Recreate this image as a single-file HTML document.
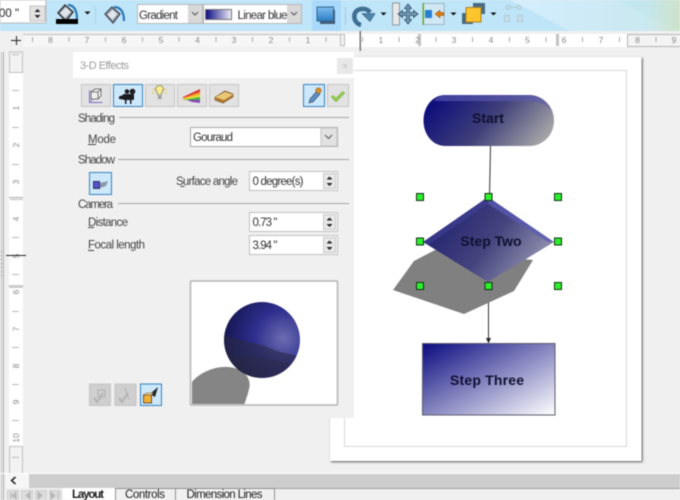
<!DOCTYPE html>
<html><head><meta charset="utf-8"><style>
html,body{margin:0;padding:0;width:680px;height:500px;overflow:hidden;background:#f0f0f0}
svg{display:block;filter:blur(.4px)}
text{font-family:"Liberation Sans",sans-serif}
</style></head><body>
<svg xmlns="http://www.w3.org/2000/svg" width="680" height="500" viewBox="0 0 680 500">
<defs>
<linearGradient id="tb" x1="0" y1="0" x2="1" y2="0"><stop offset="0" stop-color="#bfe5f9"/><stop offset=".8" stop-color="#bfe5f9"/><stop offset=".95" stop-color="#c4e6ee"/><stop offset="1" stop-color="#cfe3c9"/></linearGradient>
<linearGradient id="band" x1="0" y1="0" x2="1" y2="0"><stop offset="0" stop-color="#fff" stop-opacity=".35"/><stop offset="1" stop-color="#fff" stop-opacity=".05"/></linearGradient>
<linearGradient id="g" x1="0" y1="0" x2="1" y2="1"><stop offset="0" stop-color="#0a0a80"/><stop offset="1" stop-color="#fff"/></linearGradient>
<linearGradient id="gs" gradientUnits="userSpaceOnUse" x1="450" y1="85" x2="530" y2="155"><stop offset="0" stop-color="#10107c"/><stop offset=".5" stop-color="#40407a"/><stop offset="1" stop-color="#a4a4a6"/></linearGradient>
<linearGradient id="gd" gradientUnits="userSpaceOnUse" x1="440" y1="205" x2="540" y2="280"><stop offset="0" stop-color="#20206e"/><stop offset=".5" stop-color="#44447e"/><stop offset="1" stop-color="#a0a0b8"/></linearGradient>
<linearGradient id="gh" x1="0" y1="0" x2="1" y2="0"><stop offset="0" stop-color="#0a0a80"/><stop offset="1" stop-color="#eeeef8"/></linearGradient>
<linearGradient id="bl" x1="0" y1="0" x2="0" y2="1"><stop offset="0" stop-color="#7fbdee"/><stop offset="1" stop-color="#2c7fc6"/></linearGradient>
<radialGradient id="sph" cx=".78" cy=".48" r=".85"><stop offset="0" stop-color="#6c6cb0"/><stop offset=".45" stop-color="#2e2e8e"/><stop offset=".85" stop-color="#1a1a5c"/><stop offset="1" stop-color="#121238"/></radialGradient>
<clipPath id="spc"><circle cx="262" cy="340" r="38"/></clipPath>
<filter id="sh" x="-5%" y="-5%" width="110%" height="110%"><feDropShadow dx="1" dy="1" stdDeviation="1" flood-color="#555"/></filter>
</defs>

<!-- toolbar -->
<rect width="680" height="31" fill="url(#tb)"/>
<polygon points="510,0 615,0 680,31 570,31" fill="url(#band)"/>
<rect x="312" y="0" width="29" height="31" fill="#a9d9fa"/>
<rect x="0" y="0" width="46" height="23" fill="#fff" stroke="#b8b8b8"/>
<text x="-1" y="17" font-size="11.500" fill="#222">00 "</text>
<rect x="30" y="6" width="15" height="15" fill="#e2e2e2" stroke="#c4c4c4"/>
<path d="M37.500 9l-3 3h6zM37.500 18l-3-3h6z" fill="#222"/>
<!-- paint bucket 1 -->
<g transform="translate(56,4)">
<path d="M2 9L9 1l8 7-7 9z" fill="#8d99a2" stroke="#333" stroke-width="1.400"/><path d="M4 9l6-6 5 5-6 6z" fill="#dfe5e8"/><path d="M12 1c5 0 9 4 9 14" fill="none" stroke="#2878b8" stroke-width="2.200"/>
</g>
<rect x="56" y="19" width="22" height="5" fill="#000"/>
<path d="M84.500 11.500h6l-3 3z" fill="#111"/>
<rect x="95" y="6" width="1" height="18" fill="#b4cede"/>
<g transform="translate(104,5)"><path d="M1 9L8 2l8 7-7 9z" fill="#8d99a2" stroke="#445" stroke-width="1.200"/><path d="M3.500 9.500l5-5 5 4.500-5 6z" fill="#dfe5e8"/><path d="M10 2c6 0 10 4 10 14" fill="none" stroke="#2878b8" stroke-width="2.200"/></g>
<rect x="137.500" y="4.500" width="65" height="19" fill="#fff" stroke="#b8b8b8"/>
<text x="139" y="19" font-size="11.500" fill="#333" textLength="39">Gradient</text>
<rect x="188" y="5" width="14" height="18" fill="#d8d8d8"/>
<path d="M192 12l3 3 3-3" fill="none" stroke="#555"/>
<rect x="203.500" y="4.500" width="98" height="19" fill="#fff" stroke="#b8b8b8"/>
<rect x="205.500" y="9.500" width="26" height="10" fill="url(#gh)" stroke="#777"/>
<text x="237.500" y="19" font-size="11.500" fill="#333" textLength="50">Linear blue</text>
<rect x="287" y="5" width="14" height="18" fill="#d8d8d8"/>
<path d="M291 12l3 3 3-3" fill="none" stroke="#555"/>
<rect x="320" y="10" width="15" height="14" fill="#445f78"/>
<rect x="317" y="7" width="16.500" height="14" fill="url(#bl)" stroke="#33658e"/>
<!-- right icons -->
<rect x="345" y="7" width="1" height="18" fill="#a8c6d8"/>
<path d="M361 25c-8-2-9-13-2-15.500 5-1.500 9 0 11 3" fill="none" stroke="#3f6f92" stroke-width="4.500"/>
<path d="M362 13.500h13l-5 8z" fill="#4c86ae" stroke="#32566f" stroke-width=".6"/>
<path d="M380.500 12.500h6l-3 3z" fill="#111"/>
<rect x="392.500" y="3" width="7" height="22" fill="#e8e8e8" stroke="#8b9aa4"/>
<path d="M408 4l3.500 4.500h-2v4h4v-2l4.500 3.500-4.500 3.500v-2h-4v4h2l-3.500 4.500-3.500-4.500h2v-4h-4v2l-4.500-3.500 4.500-3.500v2h4v-4h-2z" fill="#7098b4" stroke="#2e4e66" stroke-width=".8"/>
<rect x="423.500" y="3.500" width="20.500" height="21" fill="#d0e8f4" stroke="#9db4c0"/>
<rect x="422.500" y="3" width="1.500" height="22" fill="#6aa82a"/>
<rect x="425" y="10" width="7" height="8" fill="#2a80d0"/>
<path d="M435 14l5-4v2.500h4v3h-4V18z" fill="#df7a10" stroke="#8a4a10" stroke-width=".5"/>
<path d="M450.500 12.500h6l-3 3z" fill="#111"/>
<rect x="473" y="3" width="12" height="11" fill="#4a6a80"/>
<rect x="462" y="13" width="11" height="11" fill="#4a6a80"/>
<rect x="466" y="7.500" width="15" height="14.500" fill="#fcc52e" stroke="#b08020"/>
<path d="M490.500 12.500h6l-3 3z" fill="#111"/>
<g stroke="#a8c6d2" fill="#cbdde4" opacity=".9"><rect x="504.500" y="15.500" width="5" height="6"/><rect x="517.500" y="15.500" width="5" height="6"/><circle cx="508" cy="7.500" r="2"/><circle cx="519" cy="7.500" r="2"/><path d="M510 7.500h7"/></g>

<!-- rulers -->
<rect y="31" width="680" height="21" fill="#f0f0f0"/>
<rect x="23" y="34" width="322" height="13" fill="#f6f6f6"/>
<rect x="23" y="34" width="322" height="1" fill="#bdbdbd"/>
<rect x="345" y="34" width="335" height="13" fill="#fff"/>
<rect x="340.500" y="34.500" width="4" height="11" fill="#f4f4f4" stroke="#bbb"/>
<rect x="627.500" y="34.500" width="53" height="12" fill="#f4f4f4" stroke="#b4b4b4"/>
<rect x="418" y="34" width="3" height="12" fill="#c4c4c4"/>
<rect x="556" y="34" width="3" height="12" fill="#c4c4c4"/>
<rect x="359.500" y="31" width="1.500" height="20" fill="#777"/>
<path d="M11 40.500h10M16.500 36v9" stroke="#222" fill="none"/>
<g font-size="8.500" fill="#888" text-anchor="middle">
<text x="50.500" y="43">8</text><text x="87" y="43">7</text><text x="124" y="43">6</text><text x="161" y="43">5</text><text x="197.500" y="43">4</text><text x="234" y="43">3</text><text x="271" y="43">2</text><text x="308" y="43">1</text>
<text x="381" y="43">1</text><text x="417.500" y="43">2</text><text x="454" y="43">3</text><text x="491" y="43">4</text><text x="527.500" y="43">5</text><text x="564" y="43">6</text><text x="601" y="43">7</text><text x="637.500" y="43">8</text><text x="674" y="43">9</text>
</g>
<path d="M32.500 37v5M69 37v5M105.500 37v5M142.500 37v5M179 37v5M216 37v5M252.500 37v5M289.500 37v5M326 37v5M362.500 37v5M399 37v5M436 37v5M472.500 37v5M509.500 37v5M546 37v5M582.500 37v5M619.500 37v5M656 37v5" stroke="#aaa" fill="none"/>

<rect x="9" y="52" width="14" height="422" fill="#fff"/>
<rect x="9.500" y="52" width="13" height="20.500" fill="#f2f2f2" stroke="#c0c0c0"/>
<rect x="12" y="54" width="7" height="1" fill="#bbb"/>
<rect x="9.500" y="446.500" width="13" height="27" fill="#f2f2f2" stroke="#c0c0c0"/>
<rect x="12" y="457" width="7" height="1" fill="#bbb"/>
<rect x="9" y="197" width="14" height="1" fill="#aaa"/><rect x="10" y="199" width="13" height="1" fill="#bbb"/>
<rect x="9" y="285" width="14" height="3" fill="#ccc"/>
<path d="M12 90.500h7M12 127.500h7M12 164.500h7M12 237.500h7M12 274.500h7M12 311.500h7M12 347.500h7M12 384.500h7M12 420.500h7" stroke="#bbb" fill="none"/>
<g font-size="8.500" fill="#888" text-anchor="middle">
<text transform="translate(19,108) rotate(-90)">1</text><text transform="translate(19,145) rotate(-90)">2</text><text transform="translate(19,182) rotate(-90)">3</text><text transform="translate(19,219) rotate(-90)">4</text><text transform="translate(19,292) rotate(-90)">6</text><text transform="translate(19,329) rotate(-90)">7</text><text transform="translate(19,366) rotate(-90)">8</text><text transform="translate(19,402) rotate(-90)">9</text><text transform="translate(19,438) rotate(-90)">10</text>
<text transform="translate(19,256) rotate(-90)">5</text>
</g>
<rect x="6" y="255" width="20" height="1" fill="#222"/>
<rect x="1" y="52" width="1" height="448" fill="#c4c4c4"/><rect x="3" y="52" width="1" height="448" fill="#aaa"/>
<path d="M1.500 251v28" stroke="#777" stroke-dasharray="1 3" fill="none"/>

<!-- page -->
<rect x="330" y="57" width="311.500" height="404" fill="#fff" filter="url(#sh)"/>
<rect x="344.500" y="70.500" width="282" height="376" fill="none" stroke="#d8d8d8"/>

<!-- flowchart -->
<path d="M490.500 146L489.500 197M488.500 286V338" stroke="#333" fill="none"/>
<path d="M486 338h5l-2.500 5.500z" fill="#222"/>
<polygon points="393,290 414,261 435,250 533,260 514,291 464,314" fill="#808080"/>
<path d="M423.500 120.500c0-14 9-25.500 22-25.500h84c13 0 24.500 11 24.500 25.500s-11 25.500-24.500 25.500h-84c-13 0-22-11.500-22-25.500z" fill="url(#gs)"/>
<path d="M434 101c3-4 6-6 12-6h83c9 0 17 6 22 15-6-6-12-9-22-9h-83c-5 0-8 0-12 0z" fill="#5a5ab0" opacity=".65"/>
<polygon points="488,197 554,242 488,282 423,242" fill="url(#gd)"/>
<polygon points="488,197 554,242 548,242 488,204" fill="#5a5ab4" opacity=".75"/>
<polygon points="488,197 488,204 428,245 423,242" fill="#43439c" opacity=".55"/>
<rect x="422.500" y="343.500" width="132.500" height="71.500" fill="url(#g)" stroke="#5c5c70"/>
<g font-size="14" font-weight="bold" fill="#101030" text-anchor="middle">
<text x="488" y="123">Start</text>
<text x="491" y="246">Step Two</text>
<text x="487" y="385" textLength="74">Step Three</text>
</g>
<g fill="#2cf02c" stroke="#103010">
<rect x="416.500" y="193.500" width="7" height="7"/><rect x="485" y="193.500" width="7" height="7"/><rect x="554.500" y="193.500" width="7" height="7"/>
<rect x="416.500" y="238" width="7" height="7"/><rect x="554.500" y="238" width="7" height="7"/>
<rect x="416.500" y="282.500" width="7" height="7"/><rect x="485" y="282.500" width="7" height="7"/><rect x="554.500" y="282.500" width="7" height="7"/>
</g>

<!-- dialog -->
<rect x="73" y="52" width="281" height="26" fill="#fff"/>
<rect x="73" y="78" width="281" height="340" fill="#f0f0f0"/>
<text x="80" y="69" font-size="11" fill="#9c9c9c" textLength="49">3-D Effects</text>
<rect x="337" y="58" width="16" height="16" fill="#e8e8e8"/>
<path d="M343 64l4 4m0-4l-4 4" stroke="#c8c8c8" fill="none"/>
<!-- dialog buttons -->
<g fill="#e2e2e2" stroke="#c4c4c4">
<rect x="81.500" y="84.500" width="29" height="22"/><rect x="145.500" y="84.500" width="29" height="22"/><rect x="177.500" y="84.500" width="29" height="22"/><rect x="209.500" y="84.500" width="29" height="22"/><rect x="327.500" y="84.500" width="21" height="22"/>
</g>
<g fill="#cde7fb" stroke="#3584c0">
<rect x="113.500" y="84.500" width="29" height="22"/><rect x="303.500" y="84.500" width="21" height="22"/>
</g>
<path d="M89.500 90v12.500h13" fill="none" stroke="#7a6cc8"/><path d="M90 102l11-11" stroke="#9a90d8" fill="none"/>
<path d="M91 92l4-3h6v7l-3 3h-7z M91 92h7v7M98 92l3-3" fill="#eee" stroke="#555" stroke-width=".8"/>
<g fill="#1c1c20"><rect x="123" y="94" width="11" height="6" rx="1"/><circle cx="127" cy="91.500" r="2.300"/><circle cx="132.500" cy="91.500" r="2.800"/><path d="M123 95l-4 1.500v2.500l4 .5z"/><rect x="125" y="100" width="1.500" height="4"/><rect x="130" y="100" width="1.500" height="4"/></g>
<path d="M157 92a3.800 3.800 0 1 1 5 0c-.6.8-.7 2-.7 3h-3.600c0-1-.1-2.200-.7-3z" fill="#fcee8a" stroke="#777" stroke-width=".8"/>
<rect x="158" y="96" width="3.500" height="3" fill="#999"/>
<path d="M153 89l2 1M166 89l-2 1M152 93h2M167 93h-2M159.500 85v2" stroke="#e6c820" fill="none"/>
<polygon points="183,97 200,89 200,92 183,98" fill="#e03030"/><polygon points="183,98 200,92 200,94.500 183,99" fill="#f0a020"/><polygon points="183,99 200,94.500 200,97 183,100" fill="#e8e030"/><polygon points="183,100 200,97 200,100 187,100" fill="#40b040"/><polygon points="187,100 200,100 200,103 192,102" fill="#9040c0"/>
<path d="M215 97l10-6 8 3v3l-10 6-8-3z" fill="#b57a30" stroke="#6c4c20" stroke-width=".6"/><path d="M215 97l10-5 8 2.500-9 5.500z" fill="#e8c878"/>
<path d="M309 103l1-4 7-8 3 3-7 8z" fill="#5c90c8" stroke="#345" stroke-width=".6"/><circle cx="318.500" cy="90.500" r="2.800" fill="#d89020" stroke="#754" stroke-width=".5"/>
<path d="M332 96l4 4 8-8" fill="none" stroke="#6eb030" stroke-width="3"/><path d="M332 96l4 4 8-8" fill="none" stroke="#b0e060" stroke-width="1"/>

<g font-size="11.500" fill="#444">
<text x="78" y="122" textLength="37">Shading</text>
<text x="88" y="143" textLength="28">Mode</text>
<text x="78" y="163.500" textLength="37">Shadow</text>
<text x="176" y="185" textLength="62">Surface angle</text>
<text x="78" y="208" textLength="35">Camera</text>
<text x="88" y="226" textLength="40">Distance</text>
<text x="88" y="248.500" textLength="57">Focal length</text>
</g>
<path d="M88 144.500h8M88 227.500h6M88 250.500h6M180.500 186.500h4" stroke="#444" fill="none"/>
<path d="M119 117.500h230M118 159.500h231M118 203.500h231" stroke="#a4a4a4" fill="none"/>

<rect x="190.500" y="127.500" width="147" height="19" fill="#fff" stroke="#a8a8a8"/>
<text x="193" y="141" font-size="11.500" fill="#333" textLength="40">Gouraud</text>
<rect x="321" y="128" width="16" height="18" fill="#e2e2e2" stroke="#c4c4c4"/>
<path d="M325 135l3.500 3.500 3.500-3.500" fill="none" stroke="#555"/>

<rect x="89.500" y="172.500" width="22" height="22" fill="#cde7fb" stroke="#3584c0"/>
<rect x="93.500" y="181.500" width="6" height="7" fill="#5050d0" stroke="#335"/>
<polygon points="100,183 108,181 106,186 100,188" fill="#8a98a8"/>

<g fill="#fff" stroke="#c0c0c0">
<rect x="249.500" y="171.500" width="88" height="19"/><rect x="249.500" y="212.500" width="88" height="19"/><rect x="249.500" y="235.500" width="88" height="19"/>
</g>
<g font-size="11.500" fill="#333"><text x="252.500" y="185" textLength="51">0 degree(s)</text><text x="252.500" y="226" textLength="25">0.73 "</text><text x="252.500" y="249" textLength="25">3.94 "</text></g>
<g fill="#e8e8e8" stroke="#c8c8c8"><rect x="323.500" y="173.500" width="12" height="15"/><rect x="323.500" y="214.500" width="12" height="15"/><rect x="323.500" y="237.500" width="12" height="15"/></g>
<path d="M329.500 176.500l-3 3h6zM329.500 186l-3-3h6zM329.500 217.500l-3 3h6zM329.500 227l-3-3h6zM329.500 240.500l-3 3h6zM329.500 250l-3-3h6z" fill="#222"/>

<!-- preview -->
<rect x="190.500" y="281" width="147" height="124" rx="1" fill="#fff" stroke="#b4b4b4" stroke-width="1.500"/>
<path d="M192 382c8-10 24-16 36-15 17 1 24 13 21 22-1 5-3 10-4.500 15H192z" fill="#858585"/>
<circle cx="262" cy="340" r="38" fill="url(#sph)"/>
<g clip-path="url(#spc)">
<polygon points="222,335 240,340 262,345 280,352 302,357 302,380 222,380" fill="#2a2a44" opacity=".6"/>
<polygon points="228,355 262,357 290,364 290,380 228,380" fill="#2c2c3c" opacity=".3"/>
</g>

<g fill="#cfcfcf" stroke="#c4c4c4"><rect x="89.500" y="384" width="21" height="21.500"/><rect x="115" y="384" width="21" height="21.500"/></g>
<path d="M94 398l3 4 6-9M119 398l3 4 6-9" stroke="#b4b4b4" stroke-width="2" fill="none"/><path d="M98 390h7v7h-7zM125 388l4 11" fill="none" stroke="#b0b0b0"/>
<rect x="140.500" y="384" width="21" height="21.500" fill="#cde7fb" stroke="#3584c0"/>
<polygon points="150,394 158,387 155,397" fill="#222"/>
<rect x="143.500" y="395" width="8" height="8" fill="#f0b030" stroke="#654"/>
<path d="M143.500 395l3-2h7l-2 2z" fill="#f8d880" stroke="#654" stroke-width=".6"/>

<!-- scrollbar + tabs -->
<rect x="0" y="473" width="680" height="1" fill="#fff"/>
<rect x="6" y="474" width="23" height="14" fill="#f6f6f6"/>
<path d="M15.500 477l-4 3.500 4 3.500" fill="none" stroke="#222" stroke-width="1.500"/>
<rect x="29" y="474" width="651" height="14" fill="#cdcdcd"/>
<rect x="6" y="488" width="674" height="12" fill="#f0f0f0"/>
<rect x="275" y="488" width="405" height="1" fill="#a0a0a0"/>
<g fill="#ddd" stroke="#ccc"><rect x="7.500" y="490.500" width="11" height="10"/><rect x="21.500" y="490.500" width="11" height="10"/><rect x="35.500" y="490.500" width="11" height="10"/><rect x="49.500" y="490.500" width="11" height="10"/></g>
<path d="M11 492v7M16 492l-4 3.500 4 3.500zM30 492l-4 3.500 4 3.500zM38 492l4 3.500-4 3.500zM51 492l4 3.500-4 3.500zM58 492v7" stroke="#b8b8b8" fill="#b8b8b8"/>
<rect x="63" y="488" width="52" height="12" fill="#fff"/>
<path d="M115.500 488v12M175.500 488v12M274.500 488v12M115 488.500h160" stroke="#909090" fill="none"/>
<g font-size="11.500" fill="#222"><text x="72" y="498" font-weight="bold" textLength="32">Layout</text><text x="125" y="498" textLength="40">Controls</text><text x="186.500" y="498" textLength="76">Dimension Lines</text></g>
</svg>
</body></html>
